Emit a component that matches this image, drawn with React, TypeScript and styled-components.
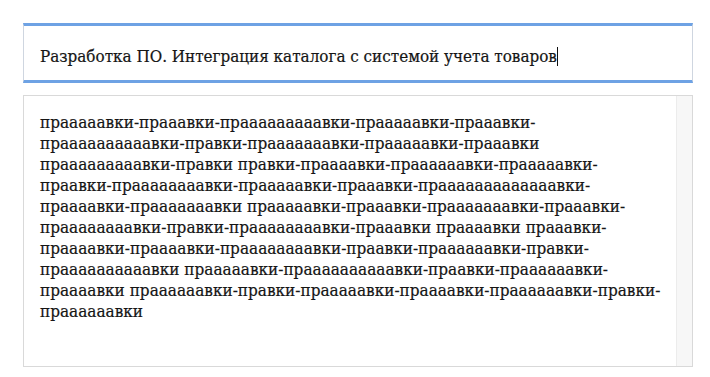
import React from "react";
import styled, { createGlobalStyle } from "styled-components";

const Global = createGlobalStyle`
  html, body { margin: 0; padding: 0; background: #ffffff; }
  body { font-family: "DejaVu Serif Condensed", "DejaVu Serif", serif; }
`;

const Page = styled.div`
  display: flex;
  flex-direction: column;
  gap: 12px;
  padding: 23px 17px 0 23px;
  width: 710px;
  height: 377px;
  box-sizing: border-box;
`;

const TitleField = styled.div`
  box-sizing: border-box;
  height: 60px;
  border-top: 3px solid #6ea2e4;
  border-bottom: 3px solid #6ea2e4;
  border-left: 1px solid #cfd6e0;
  border-right: 1px solid #cfd6e0;
  background: #ffffff;
  padding: 20px 16px 0 16px;
  font-family: "DejaVu Serif Condensed", "DejaVu Serif", serif;
  font-stretch: condensed;
  font-size: 16.9px;
  line-height: 21px;
  color: #151515;
  -webkit-text-stroke: 0.2px #151515;
  white-space: pre;
`;

const Caret = styled.span`
  display: inline-block;
  width: 0;
  height: 19px;
  border-left: 1px solid #111;
  vertical-align: -4px;
`;

const TextBox = styled.div`
  box-sizing: border-box;
  height: 272px;
  display: flex;
  border: 1px solid #d9d9d9;
  background: #ffffff;
`;

const Body = styled.div`
  flex: 1;
  padding: 16px 16px 0 16px;
  font-family: "DejaVu Serif Condensed", "DejaVu Serif", serif;
  font-stretch: condensed;
  font-size: 17px;
  line-height: 21px;
  color: #151515;
  -webkit-text-stroke: 0.2px #151515;
  white-space: pre;
  overflow: hidden;
`;

const Track = styled.div`
  width: 15px;
  background: #f7f7f7;
  border-left: 1px solid #ececec;
`;

const w = (n: number) => "пр" + "а".repeat(n) + "вки";

const lines: string[] = [
  `${w(5)}-${w(3)}-${w(9)}-${w(5)}-${w(3)}-`,
  `${w(10)}-${w(1)}-${w(7)}-${w(5)}-${w(3)}`,
  `${w(9)}-${w(1)} ${w(1)}-${w(4)}-${w(6)}-${w(5)}-`,
  `${w(2)}-${w(8)}-${w(5)}-${w(3)}-${w(13)}-`,
  `${w(4)}-${w(7)} ${w(5)}-${w(3)}-${w(7)}-${w(3)}-`,
  `${w(8)}-${w(1)}-${w(8)}-${w(3)} ${w(4)} ${w(3)}-`,
  `${w(4)}-${w(4)}-${w(8)}-${w(2)}-${w(6)}-${w(1)}-`,
  `${w(10)} ${w(5)}-${w(10)}-${w(2)}-${w(6)}-`,
  `${w(4)} ${w(6)}-${w(1)}-${w(5)}-${w(4)}-${w(6)}-${w(1)}-`,
  `${w(6)}`,
];

export default function App() {
  return (
    <>
      <Global />
      <Page>
        <TitleField>
          Разработка ПО. Интеграция каталога с системой учета товаров
          <Caret />
        </TitleField>
        <TextBox>
          <Body>{lines.join("\n")}</Body>
          <Track />
        </TextBox>
      </Page>
    </>
  );
}
